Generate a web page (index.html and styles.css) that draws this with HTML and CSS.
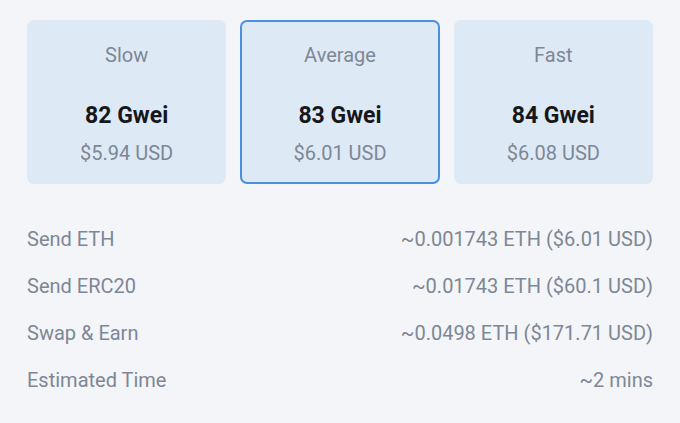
FILE: index.html
```html
<!DOCTYPE html>
<html lang="en">
<head>
  <meta charset="UTF-8" />
  <meta name="viewport" content="width=device-width, initial-scale=1.0" />
  <title>Gas fees</title>
  <link rel="stylesheet" href="styles.css">
</head>
<body>
  <div class="fee-panel">
    <div class="speed-options">
      <div class="speed-card">
        <div class="speed-name">Slow</div>
        <div class="speed-gwei">82 Gwei</div>
        <div class="speed-usd">$5.94 USD</div>
      </div>
      <div class="speed-card selected">
        <div class="speed-name">Average</div>
        <div class="speed-gwei">83 Gwei</div>
        <div class="speed-usd">$6.01 USD</div>
      </div>
      <div class="speed-card">
        <div class="speed-name">Fast</div>
        <div class="speed-gwei">84 Gwei</div>
        <div class="speed-usd">$6.08 USD</div>
      </div>
    </div>

    <ul class="fee-list">
      <li><span>Send ETH</span><span>~0.001743 ETH ($6.01 USD)</span></li>
      <li><span>Send ERC20</span><span>~0.01743 ETH ($60.1 USD)</span></li>
      <li><span>Swap &amp; Earn</span><span>~0.0498 ETH ($171.71 USD)</span></li>
      <li><span>Estimated Time</span><span>~2 mins</span></li>
    </ul>
  </div>
</body>
</html>
```

FILE: styles.css
```css
body {
  margin: 0;
  background-color: #f3f5f9;
  font-family: Roboto, "Liberation Sans", sans-serif;
}

.fee-panel {
  padding: 20px 27px;
}

.speed-options {
  display: grid;
  grid-template-columns: repeat(3, 1fr);
  gap: 14px;
}

.speed-card {
  display: flex;
  flex-direction: column;
  align-items: center;
  height: 164px;
  box-sizing: border-box;
  padding-top: 21px;
  background-color: #dee9f6;
  border: 2px solid transparent;
  border-radius: 7px;
}

.speed-card.selected {
  border-color: #4a90e2;
}

.speed-name {
  font-size: 20px;
  line-height: 24px;
  color: #7d8795;
}

.speed-gwei {
  margin-top: 35px;
  font-size: 23px;
  line-height: 28px;
  font-weight: bold;
  color: #15171a;
}

.speed-usd {
  margin-top: 11px;
  font-size: 20px;
  line-height: 24px;
  color: #7d8795;
}

.fee-list {
  list-style: none;
  margin: 32px 0 0;
  padding: 0;
}

.fee-list li {
  display: flex;
  justify-content: space-between;
  font-size: 20px;
  line-height: 47px;
  color: #7d8795;
}
```
